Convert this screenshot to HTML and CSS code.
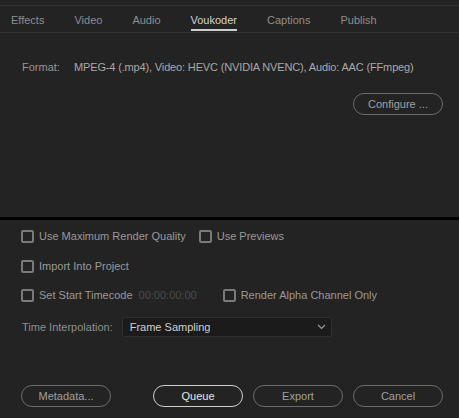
FILE: index.html
```html
<!DOCTYPE html>
<html>
<head>
<meta charset="utf-8">
<link rel="stylesheet" href="styles.css">
</head>
<body>
<div class="tabs">
  <div class="tab">Effects</div>
  <div class="tab">Video</div>
  <div class="tab">Audio</div>
  <div class="tab active">Voukoder</div>
  <div class="tab">Captions</div>
  <div class="tab">Publish</div>
</div>
<div class="upper">
  <div class="format">
    <span class="format-label">Format:</span>
    <span class="format-value">MPEG-4 (.mp4), Video: HEVC (NVIDIA NVENC), Audio: AAC (FFmpeg)</span>
  </div>
  <div class="configure-row">
    <button class="pill">Configure ...</button>
  </div>
</div>
<div class="separator"></div>
<div class="lower">
  <div class="row row1">
    <label class="check"><span class="box"></span>Use Maximum Render Quality</label>
    <label class="check previews"><span class="box"></span>Use Previews</label>
  </div>
  <div class="row row2">
    <label class="check"><span class="box"></span>Import Into Project</label>
  </div>
  <div class="row row3">
    <label class="check"><span class="box"></span>Set Start Timecode</label>
    <span class="timecode">00:00:00:00</span>
    <label class="check alpha"><span class="box"></span>Render Alpha Channel Only</label>
  </div>
  <div class="row row4">
    <span class="interp-label">Time Interpolation:</span>
    <div class="select">
      <span>Frame Sampling</span>
      <svg class="chev" width="9" height="6" viewBox="0 0 9 6"><path d="M1 1 L4.5 4.5 L8 1" fill="none" stroke="#9a9a9a" stroke-width="1.2"/></svg>
    </div>
  </div>
  <div class="buttons">
    <button class="pill">Metadata...</button>
    <div class="right-group">
      <button class="pill primary">Queue</button>
      <button class="pill">Export</button>
      <button class="pill">Cancel</button>
    </div>
  </div>
</div>
</body>
</html>
```
FILE: styles.css
```css
html, body {
  margin: 0;
  padding: 0;
  background: #232323;
  font-family: "Liberation Sans", Arial, sans-serif;
  font-size: 11px;
  color: #9a9a9a;
  width: 459px;
  height: 418px;
  overflow: hidden;
}

.tabs {
  margin-top: 5px;
  border-top: 1px solid #313131;
  border-bottom: 1px solid #313131;
  height: 26px;
  box-sizing: content-box;
  display: flex;
  gap: 30px;
  padding-left: 11px;
  align-items: flex-start;
}

.tab {
  padding-top: 6px;
  line-height: 16px;
  padding-bottom: 1px;
  border-bottom: 2px solid transparent;
  color: #8e8e8e;
}

.tab.active {
  color: #d2d2d2;
  border-bottom-color: #cfcfcf;
}

.upper {
  height: 184px;
  padding: 26px 16px 0 22px;
  box-sizing: border-box;
}

.format {
  line-height: 16px;
  display: flex;
}

.format-label {
  width: 52px;
  color: #969696;
}

.format-value {
  color: #a9a9a9;
  letter-spacing: -0.15px;
}

.configure-row {
  display: flex;
  justify-content: flex-end;
  margin-top: 18px;
}

.pill {
  width: 90px;
  height: 22px;
  border: 1px solid #6c6c6c;
  border-radius: 11px;
  background: transparent;
  color: #a0a0a0;
  font-family: "Liberation Sans", Arial, sans-serif;
  font-size: 11px;
  padding: 0;
  box-sizing: border-box;
}

.pill.primary {
  border-color: #cfcfcf;
  color: #e6e6e6;
}

.separator {
  height: 3px;
  background: #000;
}

.lower {
  padding: 6px 16px 0 21px;
}

.row {
  display: flex;
  align-items: center;
  height: 20px;
}

.row2 { margin-top: 10px; }
.row3 { margin-top: 9px; }
.row4 { margin-top: 12px; }

.check {
  display: flex;
  align-items: center;
  color: #999;
}

.box {
  width: 13px;
  height: 13px;
  box-sizing: border-box;
  border: 2px solid #7a7a7a;
  border-radius: 2px;
  margin-right: 5px;
}

.previews { margin-left: 13px; }

.timecode {
  margin-left: 6px;
  color: #4c4c4c;
}

.alpha { margin-left: 26px; }

.interp-label {
  margin-left: 1px;
  color: #8e8e8e;
}

.select {
  margin-left: 9px;
  width: 210px;
  height: 20px;
  box-sizing: border-box;
  background: #1b1b1b;
  border: 1px solid #2f2f2f;
  border-radius: 2px;
  display: flex;
  align-items: center;
  justify-content: space-between;
  padding: 0 5px 0 7px;
  color: #cfcfcf;
}

.buttons {
  margin-top: 48px;
  display: flex;
  justify-content: space-between;
}

.right-group {
  display: flex;
  gap: 10px;
}
```
